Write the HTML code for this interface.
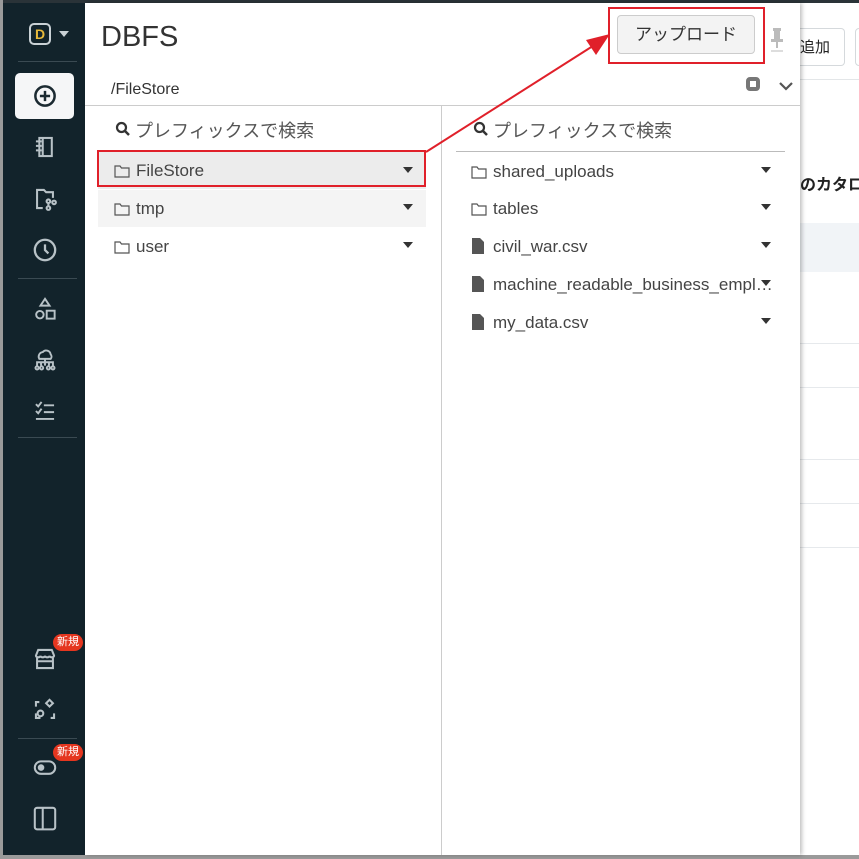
<!DOCTYPE html>
<html><head><meta charset="utf-8"><style>
*{margin:0;padding:0;box-sizing:border-box}
body{width:859px;height:859px;overflow:hidden;position:relative;background:#fff;font-family:"Liberation Sans","Noto Sans CJK JP",sans-serif;color:#333}
.abs{position:absolute}
#side{left:3px;top:3px;width:82px;height:852px;background:#12232b}
.hr{position:absolute;left:15px;width:59px;height:1px;background:#3a4a52}
.ic{position:absolute;left:25px;width:34px;height:34px}
.badge{position:absolute;left:50px;width:30px;height:17px;background:#e5361f;border-radius:9px;color:#fff;font-size:11px;text-align:center;line-height:17px}
.row{position:absolute;height:37px;font-size:17px;color:#444;line-height:37px}
.row svg{position:absolute;left:16px;top:12px}
.row span{position:absolute;left:38px}
.car{position:absolute;width:0;height:0;border-left:5px solid transparent;border-right:5px solid transparent;border-top:6px solid #333}
</style></head><body>
<div class="abs" style="left:0;top:0;width:859px;height:3px;background:#2a3338"></div>
<div class="abs" style="left:0;top:0;width:3px;height:859px;background:#9a9a9a"></div>
<div class="abs" style="left:0;top:855px;width:859px;height:4px;background:#9a9a9a"></div>
<div id="side" class="abs">
 <div class="abs" style="left:26px;top:20px;width:22px;height:22px;border:2px solid #c9d1d5;border-radius:5px;color:#e8b93a;font-size:14px;font-weight:bold;text-align:center;line-height:18px">D</div>
 <div class="car" style="left:56px;top:28px;border-top-color:#c9d1d5"></div>
 <div class="hr" style="top:58px"></div>
 <div class="abs" style="left:12px;top:70px;width:59px;height:46px;background:#f5f6f7;border-radius:5px"></div>
 <svg class="ic" style="top:76px" viewBox="0 0 30 30"><circle cx="15" cy="15" r="8.5" fill="none" stroke="#1b2a31" stroke-width="2.2"/><path d="M15 10.5v9M10.5 15h9" stroke="#1b2a31" stroke-width="2.2"/></svg>
 <svg class="ic" style="top:127px" viewBox="0 0 30 30" fill="none" stroke="#b8c2c7" stroke-width="1.8"><rect x="10" y="7" width="11" height="16"/><path d="M7 10h5M7 14h5M7 18h5M13 7v16"/></svg>
 <svg class="ic" style="top:179px" viewBox="0 0 30 30" fill="none" stroke="#b8c2c7" stroke-width="1.8"><path d="M13 23H8V7h6l2 2h6v5"/><circle cx="18" cy="17" r="1.6"/><circle cx="23" cy="18" r="1.6"/><circle cx="18" cy="23" r="1.6"/><path d="M18 18.5v3"/></svg>
 <svg class="ic" style="top:230px" viewBox="0 0 30 30" fill="none" stroke="#b8c2c7" stroke-width="2"><circle cx="15" cy="15" r="9"/><path d="M15 10v5l3 3"/></svg>
 <div class="hr" style="top:275px"></div>
 <svg class="ic" style="top:289px" viewBox="0 0 30 30" fill="none" stroke="#b8c2c7" stroke-width="1.7"><path d="M15 6l4 6h-8z"/><circle cx="10.5" cy="20" r="3.3"/><rect x="16.5" y="16.5" width="7" height="7"/></svg>
 <svg class="ic" style="top:340px" viewBox="0 0 30 30" fill="none" stroke="#b8c2c7" stroke-width="1.7"><path d="M10 14a4 4 0 0 1 3-6a4 4 0 0 1 7 2a3 3 0 0 1 0 4zM15 14v6M8 20v-3h14v3M11.5 17v3M18.5 17v3"/><circle cx="8" cy="22" r="1.4"/><circle cx="12" cy="22" r="1.4"/><circle cx="18" cy="22" r="1.4"/><circle cx="22" cy="22" r="1.4"/></svg>
 <svg class="ic" style="top:391px" viewBox="0 0 30 30" fill="none" stroke="#b8c2c7" stroke-width="1.7"><path d="M7 9l2 2 3-4M7 15l2 2 3-4M14 10h9M14 16h9M7 22h16"/></svg>
 <div class="hr" style="top:434px"></div>
 <svg class="ic" style="top:639px" viewBox="0 0 30 30" fill="none" stroke="#b8c2c7" stroke-width="1.8"><path d="M7 12l2-5h12l2 5c0 2-4 2-4 0c0 2-4 2-4 0c0 2-4 2-4 0c0 2-4 2-4 0zM8 14v9h14v-9M8 17h14"/></svg>
 <div class="badge" style="top:631px">新規</div>
 <svg class="ic" style="top:690px" viewBox="0 0 30 30" fill="none" stroke="#b8c2c7" stroke-width="1.8"><path d="M7 12V8h3M7 18v4h4M20 22h3v-4"/><path d="M19 6l3 3-3 3-3-3z"/><circle cx="11" cy="18" r="2.5"/></svg>
 <div class="hr" style="top:735px"></div>
 <svg class="ic" style="top:747px" viewBox="0 0 30 30" fill="none" stroke="#b8c2c7" stroke-width="1.8"><rect x="6" y="10" width="18" height="11" rx="5.5"/><circle cx="11.5" cy="15.5" r="2" fill="#b8c2c7"/></svg>
 <div class="badge" style="top:741px">新規</div>
 <svg class="ic" style="top:798px" viewBox="0 0 30 30" fill="none" stroke="#b8c2c7" stroke-width="1.8"><rect x="6" y="6" width="18" height="19" rx="2"/><path d="M13 6v19"/></svg>
</div>
<div class="abs" style="left:800px;top:28px;width:45px;height:38px;border:1px solid #d5d9dc;border-left:none;border-radius:0 4px 4px 0;font-size:15px;line-height:38px;color:#222">追加</div>
<div class="abs" style="left:855px;top:28px;width:10px;height:38px;border:1px solid #d5d9dc;border-radius:4px"></div>
<div class="abs" style="left:800px;top:79px;width:59px;height:1px;background:#e3e6e8"></div>
<div class="abs" style="left:800px;top:171px;font-size:16px;font-weight:bold;color:#222;white-space:nowrap">のカタログ</div>
<div class="abs" style="left:800px;top:223px;width:59px;height:49px;background:#f1f4f7"></div>
<div class="abs" style="left:800px;top:343px;width:59px;height:1px;background:#e6e9ec"></div>
<div class="abs" style="left:800px;top:387px;width:59px;height:1px;background:#e6e9ec"></div>
<div class="abs" style="left:800px;top:459px;width:59px;height:1px;background:#e6e9ec"></div>
<div class="abs" style="left:800px;top:503px;width:59px;height:1px;background:#e6e9ec"></div>
<div class="abs" style="left:800px;top:547px;width:59px;height:1px;background:#e6e9ec"></div>
<div class="abs" style="left:85px;top:3px;width:715px;height:852px;background:#fff;box-shadow:2px 0 4px rgba(0,0,0,.25)"></div>
<div class="abs" style="left:101px;top:21px;font-size:29px;color:#333">DBFS</div>
<div class="abs" style="left:617px;top:15px;width:138px;height:39px;background:#f3f3f3;border:1px solid #ccc;border-radius:4px;font-size:17px;text-align:center;line-height:37px;color:#333">アップロード</div>
<div class="abs" style="left:608px;top:7px;width:157px;height:57px;border:2px solid #e0202a"></div>
<svg class="abs" style="left:768px;top:26px" width="18" height="28" viewBox="0 0 18 28" fill="#bbb"><rect x="5" y="2" width="8" height="3"/><rect x="6" y="4" width="6" height="9"/><rect x="3" y="13" width="12" height="3"/><rect x="8" y="16" width="2" height="6"/><rect x="3" y="24" width="12" height="2" fill="#ddd"/></svg>
<div class="abs" style="left:111px;top:81px;font-size:16px;color:#333">/FileStore</div>
<div class="abs" style="left:746px;top:77px;width:14px;height:14px;border:4px solid #777;border-radius:4px"></div>
<svg class="abs" style="left:778px;top:80px" width="16" height="12" viewBox="0 0 16 12"><path d="M2 3l6 6 6-6" fill="none" stroke="#555" stroke-width="2.2"/></svg>
<div class="abs" style="left:85px;top:105px;width:715px;height:1px;background:#ccc"></div>
<div class="abs" style="left:441px;top:105px;width:1px;height:750px;background:#ccc"></div>
<svg class="abs" style="left:115px;top:121px" width="16" height="16" viewBox="0 0 16 16"><circle cx="6.5" cy="6.5" r="4.5" fill="none" stroke="#333" stroke-width="2.2"/><path d="M10 10l4 4" stroke="#333" stroke-width="2.5"/></svg>
<div class="abs" style="left:135px;top:117px;font-size:18px;color:#555">プレフィックスで検索</div>
<div class="row" style="left:98px;top:152px;width:328px;background:#ececec"><svg width="16" height="14" viewBox="0 0 16 14"><path d="M1 2h5l1.5 2H15v9H1z" fill="none" stroke="#555" stroke-width="1.2"/></svg><span>FileStore</span><div class="car" style="left:305px;top:15px"></div></div>
<div class="abs" style="left:97px;top:150px;width:329px;height:37px;border:2px solid #e0202a"></div>
<div class="row" style="left:98px;top:190px;width:328px;background:#f4f4f4"><svg width="16" height="14" viewBox="0 0 16 14"><path d="M1 2h5l1.5 2H15v9H1z" fill="none" stroke="#555" stroke-width="1.2"/></svg><span>tmp</span><div class="car" style="left:305px;top:14px"></div></div>
<div class="row" style="left:98px;top:228px;width:328px"><svg width="16" height="14" viewBox="0 0 16 14"><path d="M1 2h5l1.5 2H15v9H1z" fill="none" stroke="#555" stroke-width="1.2"/></svg><span>user</span><div class="car" style="left:305px;top:14px"></div></div>
<svg class="abs" style="left:473px;top:121px" width="16" height="16" viewBox="0 0 16 16"><circle cx="6.5" cy="6.5" r="4.5" fill="none" stroke="#333" stroke-width="2.2"/><path d="M10 10l4 4" stroke="#333" stroke-width="2.5"/></svg>
<div class="abs" style="left:493px;top:117px;font-size:18px;color:#555">プレフィックスで検索</div>
<div class="abs" style="left:456px;top:151px;width:329px;height:1px;background:#bbb"></div>
<div class="row" style="left:455px;top:153px;width:330px"><svg width="16" height="14" viewBox="0 0 16 14"><path d="M1 2h5l1.5 2H15v9H1z" fill="none" stroke="#555" stroke-width="1.2"/></svg><span>shared_uploads</span><div class="car" style="left:306px;top:14px"></div></div>
<div class="row" style="left:455px;top:190px;width:330px"><svg width="16" height="14" viewBox="0 0 16 14"><path d="M1 2h5l1.5 2H15v9H1z" fill="none" stroke="#555" stroke-width="1.2"/></svg><span>tables</span><div class="car" style="left:306px;top:14px"></div></div>
<div class="row" style="left:455px;top:228px;width:330px"><svg width="14" height="16" viewBox="0 0 14 16" style="top:10px"><path d="M1 0h8l4 4v12H1z" fill="#555"/></svg><span>civil_war.csv</span><div class="car" style="left:306px;top:14px"></div></div>
<div class="row" style="left:455px;top:266px;width:330px;overflow:hidden"><svg width="14" height="16" viewBox="0 0 14 16" style="top:10px"><path d="M1 0h8l4 4v12H1z" fill="#555"/></svg><span style="width:284px;overflow:hidden;white-space:nowrap;text-overflow:ellipsis">machine_readable_business_employment</span><div class="car" style="left:306px;top:14px"></div></div>
<div class="row" style="left:455px;top:304px;width:330px"><svg width="14" height="16" viewBox="0 0 14 16" style="top:10px"><path d="M1 0h8l4 4v12H1z" fill="#555"/></svg><span>my_data.csv</span><div class="car" style="left:306px;top:14px"></div></div>
<svg class="abs" style="left:0;top:0" width="859" height="859"><path d="M426 152L596 44" stroke="#e0202a" stroke-width="2"/><path d="M610 34L586 40L596 55z" fill="#e0202a"/></svg>
</body></html>
